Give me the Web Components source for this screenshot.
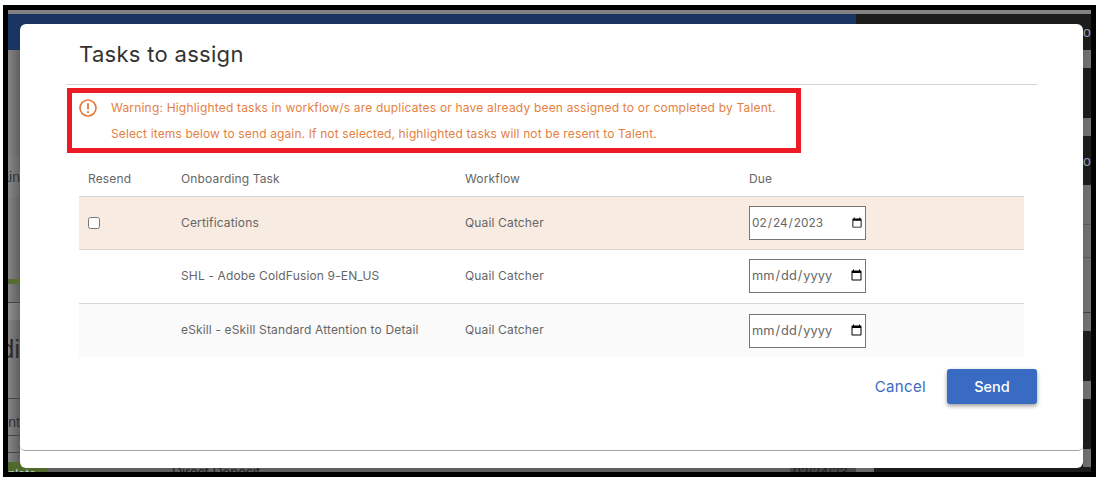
<!DOCTYPE html>
<html>
<head>
<meta charset="utf-8">
<title>Tasks to assign</title>
<style>
  html, body { margin: 0; background: #fff; }
  body { font-family: "Inter", "Liberation Sans", sans-serif; }
</style>
</head>
<body>
<screen-frame>
  <backdrop-page></backdrop-page>
  <assign-modal heading="Tasks to assign">
    <warning-note slot="notice">
      <span>Warning: Highlighted tasks in workflow/s are duplicates or have already been assigned to or completed by Talent.</span>
      <span>Select items below to send again. If not selected, highlighted tasks will not be resent to Talent.</span>
    </warning-note>
    <task-table>
      <task-row task="Certifications" workflow="Quail Catcher" due="2023-02-24" resend highlight></task-row>
      <task-row task="SHL - Adobe ColdFusion 9-EN_US" workflow="Quail Catcher" tall></task-row>
      <task-row task="eSkill - eSkill Standard Attention to Detail" workflow="Quail Catcher" shaded></task-row>
    </task-table>
  </assign-modal>
</screen-frame>

<script>
class ScreenFrame extends HTMLElement {
  constructor() {
    super();
    this.attachShadow({ mode: 'open' });
    this.shadowRoot.innerHTML = `
      <style>
        :host {
          display: block;
          position: relative;
          box-sizing: border-box;
          width: 1093px;
          height: 472px;
          margin: 5px 0 0 3px;
          border: 5px solid #000;
          overflow: hidden;
        }
      </style>
      <slot></slot>
    `;
  }
}

// [height, class, text] of each band of the page behind the dialog
const LEFT_BANDS = [
  [4, 'top'], [36, 'navy'], [107, ''], [40, 'tint', 'ain'], [82, ''], [5, 'green'], [18, ''],
  [1, 'line'], [17, 'pale'], [78, 'big', 'edi'], [1, 'line'], [9, ''], [27, 'small', 'ent'],
  [1, 'line'], [16, ''], [1, 'line'], [9, '']
];
const RIGHT_BANDS = [
  [4, 'top'], [36, 'small-r', 'oc'], [18, 'grey'], [50, ''], [18, 'grey'], [49, 'small-r', 'ov'],
  [39, 'grey'], [1, 'hair'], [32, 'grey'], [1, 'hair'], [54, 'grey'], [1, 'line'], [18, 'grey'],
  [50, 'small-r', 's'], [18, 'grey'], [50, ''], [18, 'grey']
];

class BackdropPage extends HTMLElement {
  constructor() {
    super();
    this.attachShadow({ mode: 'open' });
    const bands = (list) => list.map(([h, cls, text]) =>
      `<div class="band ${cls}" style="height:${h}px">${text ? `<span>${text}</span>` : ''}</div>`).join('');
    this.shadowRoot.innerHTML = `
      <style>
        :host {
          display: grid;
          grid-template-columns: 848px 1fr;
          height: 100%;
          background: #1c1c1c;
          font-family: "Liberation Sans", sans-serif;
        }
        .left { background: linear-gradient(90deg, #858585, #5f5f5f 12px, #5f5f5f); display: flex; flex-direction: column; }
        .left .band { width: 12px; }
        .left .top, .left .navy { width: auto; }
        .right { display: flex; flex-direction: column; }
        .band {
          flex: none;
          display: flex;
          justify-content: flex-end;
          align-items: center;
          overflow: hidden;
          white-space: nowrap;
          font-size: 14px;
          color: #333;
        }
        .top { background: #828282; }
        .navy { background: #1b3562; }
        .tint { background: rgba(255,255,255,.03); }
        .green { background: #566c30; }
        .line { background: #444; }
        .pale { background: rgba(255,255,255,.08); }
        .big { font-size: 25px; color: #2b2b2b; padding-bottom: 20px; box-sizing: border-box; }
        .small { color: #2f2f2f; }
        .grey { background: linear-gradient(90deg, #6a6a6a, #7b7b7b); }
        .hair { background: #5a5a5a; }
        .right .small-r { justify-content: flex-end; color: #8f9aa8; }
        .bottom-l, .bottom-r { display: flex; flex: 1; overflow: hidden; font-size: 14px; line-height: 14px; color: #1f1f1f; }
        .done {
          width: 40px;
          padding-top: 5px;
          box-sizing: border-box;
          background: #4f6a2c;
          color: #c9c9c9;
          font-size: 13px;
          white-space: nowrap;
          overflow: hidden;
        }
        .deposit { margin-left: 124px; padding-top: 3px; white-space: nowrap; }
        .bottom-r .date { width: 18px; background: #696969; }
        .bottom-l .stamp { margin-left: auto; width: 63px; background: #474747; padding: 3px 0 0 3px; white-space: nowrap; }
        .right .band { margin-left: 227px; }
        .right .top { margin-left: 0; }
      </style>
      <div class="left">
        ${bands(LEFT_BANDS)}
        <div class="bottom-l">
          <div class="done">plete</div>
          <div class="deposit">Direct Deposit</div>
          <div class="stamp">02/24/23</div>
        </div>
      </div>
      <div class="right">
        ${bands(RIGHT_BANDS)}
        <div class="bottom-r"><div class="date"></div></div>
      </div>
    `;
  }
}

class AssignModal extends HTMLElement {
  constructor() {
    super();
    this.attachShadow({ mode: 'open' });
    this.shadowRoot.innerHTML = `
      <style>
        :host {
          position: absolute;
          left: 12px;
          top: 14px;
          width: 1063px;
          height: 444px;
          display: flex;
          flex-direction: column;
          background: #fff;
          border-radius: 6px;
          color: #666;
        }
        .main {
          flex: 1;
          border-bottom: 1px solid #a3a3a3;
          border-radius: 0 0 5px 5px;
        }
        h2 {
          height: 61px;
          box-sizing: border-box;
          margin: 0 46px;
          padding: 15px 0 0 13px;
          font-size: 22px;
          line-height: 30px;
          font-weight: 400;
          letter-spacing: .3px;
          color: #333;
          border-bottom: 1px solid #d4d4d4;
        }
        .notice { margin-left: 47px; padding-top: 3px; }
        .content { padding: 7px 59px 0; }
        .actions {
          display: flex;
          justify-content: flex-end;
          align-items: center;
          gap: 21px;
          padding: 12px 46px 0 0;
        }
        .cancel {
          font-size: 15px;
          letter-spacing: .35px;
          color: #3a6bc2;
          background: none;
          border: 0;
          padding: 0;
          font-family: inherit;
        }
        .send {
          width: 90px;
          height: 35px;
          border: 0;
          border-radius: 3px;
          background: #3a6bc2;
          color: #fff;
          font-family: inherit;
          font-size: 14.5px;
          font-weight: 500;
          box-shadow: 0 2px 4px rgba(0,0,0,.4);
        }
        footer { height: 17px; flex: none; }
      </style>
      <div class="main">
        <h2>${this.getAttribute('heading')}</h2>
        <div class="notice"><slot name="notice"></slot></div>
        <div class="content"><slot></slot></div>
        <div class="actions">
          <button class="cancel">Cancel</button>
          <button class="send">Send</button>
        </div>
      </div>
      <footer></footer>
    `;
  }
}

class WarningNote extends HTMLElement {
  constructor() {
    super();
    this.attachShadow({ mode: 'open' });
    this.shadowRoot.innerHTML = `
      <style>
        :host {
          display: flex;
          box-sizing: border-box;
          width: 734px;
          height: 65px;
          border: 5px solid #ed1c24;
          color: #e47f42;
          font-size: 12px;
          letter-spacing: .19px;
        }
        svg { flex: none; margin: 5px 0 0 6px; }
        .lines { display: flex; flex-direction: column; gap: 12px; margin-left: 13px; padding-top: 8px; }
        ::slotted(span) { display: block; line-height: 14px; white-space: nowrap; }
        ::slotted(span:last-child) { letter-spacing: .13px; }
      </style>
      <svg width="20" height="20" viewBox="0 0 20 20" fill="none" stroke="#e07b39">
        <circle cx="10" cy="10" r="8" stroke-width="1.6"/>
        <path d="M10 5.2v6.2" stroke-width="1.8"/>
        <path d="M10 13.2v1.8" stroke-width="1.8"/>
      </svg>
      <div class="lines"><slot></slot></div>
    `;
  }
}

class TaskTable extends HTMLElement {
  constructor() {
    super();
    this.attachShadow({ mode: 'open' });
    this.shadowRoot.innerHTML = `
      <style>
        :host { display: block; width: 945px; font-size: 12px; letter-spacing: .15px; color: #666; }
        .head {
          display: grid;
          grid-template-columns: 93px 284px 284px 1fr;
          height: 37px;
          box-sizing: border-box;
          align-items: center;
          border-bottom: 1px solid #d6d6d6;
        }
        .head span { padding-left: 9px; }
      </style>
      <div class="head">
        <span>Resend</span><span>Onboarding Task</span><span>Workflow</span><span>Due</span>
      </div>
      <slot></slot>
    `;
  }
}

class TaskRow extends HTMLElement {
  constructor() {
    super();
    this.attachShadow({ mode: 'open' });
    const due = this.getAttribute('due') || '';
    this.shadowRoot.innerHTML = `
      <style>
        :host {
          display: grid;
          grid-template-columns: 93px 284px 284px 1fr;
          height: 53px;
          box-sizing: border-box;
          align-items: center;
          border-bottom: 1px solid #d6d6d6;
          white-space: nowrap;
        }
        :host([tall]) { height: 54px; }
        :host([tall]) input[type=date] { margin-bottom: 2px; }
        :host([highlight]) { background: #f8ebe1; }
        :host([shaded]) { background: #fafafa; border-bottom: 0; }
        .cell { padding-left: 9px; }
        .text { padding-bottom: 2px; }
        input[type=checkbox] { margin: 0; width: 12px; height: 12px; display: block; }
        input[type=date] {
          display: block;
          box-sizing: border-box;
          width: 117px;
          height: 34px;
          margin: 0;
          padding: 1px 0 1px 1px;
          border: 1px solid #767676;
          border-radius: 0;
          background: #fff;
          color: #666;
          font: inherit;
          font-size: ${due ? '11.8px' : '12.8px'};
        }
      </style>
      <div class="cell">${this.hasAttribute('resend') ? '<input type="checkbox">' : ''}</div>
      <div class="cell text">${this.getAttribute('task')}</div>
      <div class="cell text">${this.getAttribute('workflow')}</div>
      <div class="cell"><input type="date" value="${due}"></div>
    `;
  }
}

customElements.define('screen-frame', ScreenFrame);
customElements.define('backdrop-page', BackdropPage);
customElements.define('assign-modal', AssignModal);
customElements.define('warning-note', WarningNote);
customElements.define('task-table', TaskTable);
customElements.define('task-row', TaskRow);
</script>
</body>
</html>
